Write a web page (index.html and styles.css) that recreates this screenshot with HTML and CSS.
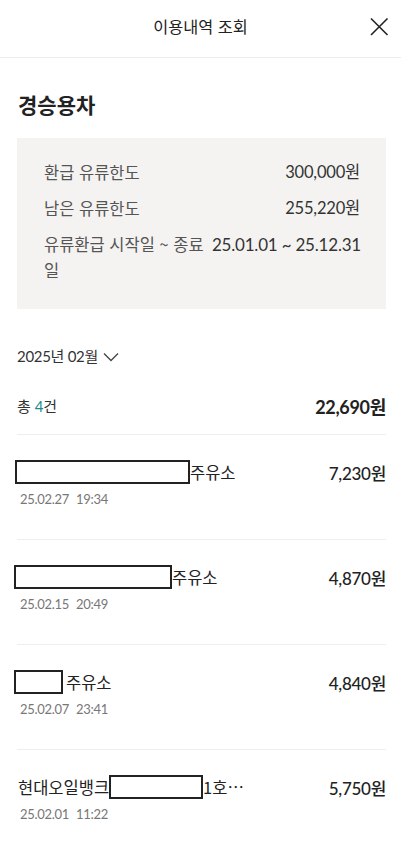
FILE: index.html
```html
<!DOCTYPE html>
<html lang="ko">
<head>
<meta charset="utf-8">
<link rel="stylesheet" href="styles.css">
</head>
<body>
<header class="topbar">
  <div class="topbar-title">이용내역 조회</div>
  <button class="close-btn" aria-label="닫기">
    <svg width="20" height="20" viewBox="0 0 20 20"><path d="M2 1.5L18.5 18M18.5 1.5L2 18" stroke="#222" stroke-width="1.6" fill="none"/></svg>
  </button>
</header>
<main class="content">
  <h1 class="car-type">경승용차</h1>
  <section class="limit-box">
    <div class="limit-row"><span class="limit-label">환급 유류한도</span><span class="limit-value">300,000원</span></div>
    <div class="limit-row"><span class="limit-label">남은 유류한도</span><span class="limit-value">255,220원</span></div>
    <div class="limit-text"><span class="limit-label">유류환급 시작일 ~ 종료</span> <span class="limit-value">25.01.01 ~ 25.12.31</span><br><span class="limit-label">일</span></div>
  </section>
  <div class="month-select">
    <span>2025년 02월</span>
    <svg width="16" height="10" viewBox="0 0 16 10"><path d="M1 1.5L8 8.5L15 1.5" stroke="#444" stroke-width="1.3" fill="none"/></svg>
  </div>
  <div class="summary">
    <span class="summary-count">총 <em>4</em>건</span>
    <span class="summary-total">22,690원</span>
  </div>
  <ul class="history">
    <li class="item">
      <div class="item-main">
        <div class="item-title"><span class="mask" style="width:175px"></span>주유소</div>
        <div class="item-amount">7,230원</div>
      </div>
      <div class="item-date"><span>25.02.27</span><span>19:34</span></div>
    </li>
    <li class="item">
      <div class="item-main">
        <div class="item-title"><span class="mask shift" style="width:158px"></span>주유소</div>
        <div class="item-amount">4,870원</div>
      </div>
      <div class="item-date"><span>25.02.15</span><span>20:49</span></div>
    </li>
    <li class="item">
      <div class="item-main">
        <div class="item-title"><span class="mask shift gap" style="width:49px"></span>주유소</div>
        <div class="item-amount">4,840원</div>
      </div>
      <div class="item-date"><span>25.02.07</span><span>23:41</span></div>
    </li>
    <li class="item">
      <div class="item-main">
        <div class="item-title indent">현대오일뱅크<span class="mask" style="width:94px"></span>1호…</div>
        <div class="item-amount">5,750원</div>
      </div>
      <div class="item-date"><span>25.02.01</span><span>11:22</span></div>
    </li>
  </ul>
</main>
</body>
</html>
```
FILE: styles.css
```css
* { box-sizing: border-box; }
html, body { margin: 0; padding: 0; background: #fff; }
body {
  font-family: Lato, "Noto Sans CJK KR", sans-serif;
  color: #222;
  width: 401px;
}
.topbar {
  height: 58px;
  border-bottom: 1px solid #ececec;
  display: flex;
  align-items: center;
  justify-content: center;
  position: relative;
}
.topbar-title {
  font-family: "Noto Sans CJK KR", sans-serif;
  font-size: 16.3px;
  color: #222;
  margin-top: -6px;
}
.close-btn {
  position: absolute;
  right: 12px;
  top: 17px;
  width: 20px;
  height: 20px;
  padding: 0;
  border: 0;
  background: none;
}
.close-btn svg { display: block; }
.content { padding: 0 15px 0 17px; }
.car-type {
  font-family: "Noto Sans CJK KR", sans-serif;
  font-size: 21px;
  font-weight: 700;
  line-height: 28px;
  margin: 32px 0 20px 1px;
}
.limit-box {
  background: #f4f3f1;
  padding: 22px 26px 28px 27px;
  height: 171px;
  font-size: 16.5px;
  line-height: 25px;
}
.limit-row {
  display: flex;
  justify-content: space-between;
  margin-bottom: 11px;
}
.limit-label { color: #555; font-family: "Noto Sans CJK KR", sans-serif; }
.limit-value { color: #333; font-family: Lato, "Noto Sans CJK KR", sans-serif; letter-spacing: -0.2px; }
.limit-text { white-space: nowrap; }
.limit-text .limit-value { margin-left: 4px; font-size: 17px; }
.month-select {
  margin-top: 35px;
  display: flex;
  align-items: center;
  gap: 5px;
  font-size: 15px;
  line-height: 24px;
  color: #333;
  letter-spacing: -0.3px;
}
.month-select svg { display: block; margin-top: 1px; }
.summary {
  display: flex;
  justify-content: space-between;
  align-items: center;
  margin-top: 15px;
  height: 52px;
  padding-bottom: 6px;
  border-bottom: 1px solid #eeeeee;
}
.summary-count { font-size: 15px; color: #333; }
.summary-count em { font-style: normal; color: #1a8a8a; }
.summary-total { font-size: 18px; font-weight: 700; color: #222; letter-spacing: -0.3px; }
.history { list-style: none; margin: 0; padding: 0; }
.item {
  padding: 24px 0 32px;
  border-bottom: 1px solid #eeeeee;
  height: 105px;
}
.item-main {
  display: flex;
  justify-content: space-between;
  align-items: center;
  height: 26px;
}
.item-title {
  font-family: "Noto Sans CJK KR", sans-serif;
  font-size: 16.5px;
  color: #222;
  display: flex;
  align-items: center;
  margin-left: -2px;
  white-space: nowrap;
}
.item-title.indent { margin-left: 1px; }
.mask {
  display: inline-block;
  height: 24px;
  border: 2px solid #222;
  background: #fff;
}
.mask.shift { margin-left: -1px; }
.mask.gap { margin-right: 3px; }
.item-amount {
  font-size: 17px;
  font-weight: 500;
  color: #222;
  letter-spacing: -0.3px;
}
.item-date {
  margin-top: 5px;
  margin-left: 3px;
  font-size: 13px;
  line-height: 18px;
  color: #777;
  display: flex;
  gap: 7px;
  letter-spacing: -0.3px;
}
```
